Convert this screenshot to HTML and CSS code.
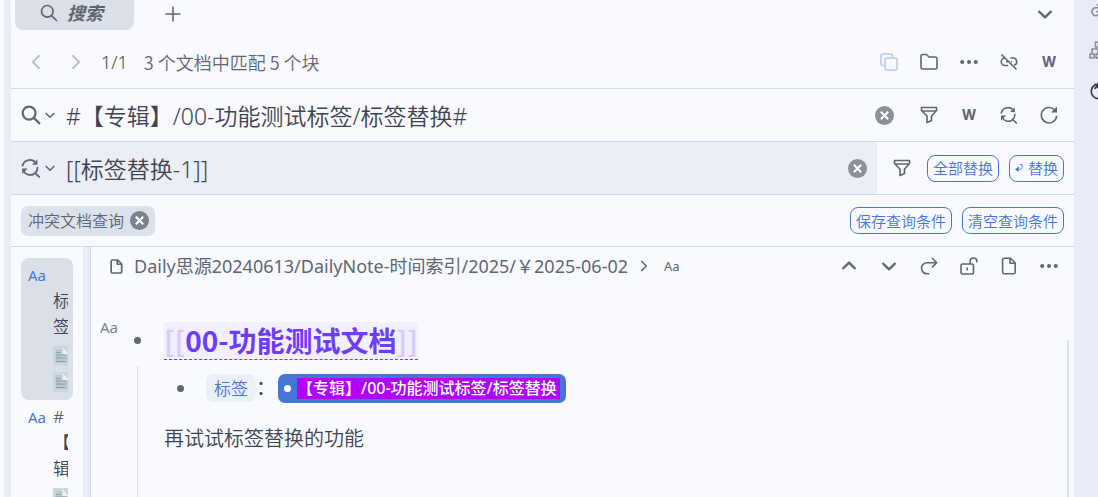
FILE: index.html
```html
<!DOCTYPE html>
<html lang="zh-CN">
<head>
<meta charset="utf-8">
<meta name="viewport" content="width=device-width, initial-scale=1">
<title>搜索</title>
<link rel="stylesheet" href="styles.css">
</head>
<body>
<svg class="sprite" aria-hidden="true">
  <symbol id="search" viewBox="0 0 18 18"><circle cx="7.3" cy="7.3" r="5.8"/><path d="M11.6 11.6 17 17"/></symbol>
  <symbol id="down" viewBox="0 0 18 18"><path d="M2.5 6 9 12.3 15.5 6"/></symbol>
  <symbol id="up" viewBox="0 0 18 18"><path d="M2.5 12 9 5.7 15.5 12"/></symbol>
  <symbol id="left" viewBox="0 0 18 18"><path d="M13 1.5 5.5 9 13 16.5"/></symbol>
  <symbol id="right" viewBox="0 0 18 18"><path d="M5 1.5 12.5 9 5 16.5"/></symbol>
  <symbol id="plus" viewBox="0 0 18 18"><path d="M9 1.5V16.5M1.5 9H16.5"/></symbol>
  <symbol id="copy" viewBox="0 0 18 18"><rect x="5" y="5" width="12" height="12" rx="2"/><path d="M5 12.5H3A2 2 0 0 1 1 10.5V3A2 2 0 0 1 3 1H10.5A2 2 0 0 1 12.5 3V5"/></symbol>
  <symbol id="folder" viewBox="0 0 18 18"><path d="M1 14.3V3.2Q1 1.5 2.7 1.5H6.5L9 4H15.3Q17 4 17 5.7V14.3Q17 16 15.3 16H2.7Q1 16 1 14.3Z"/></symbol>
  <symbol id="more" viewBox="0 0 18 18"><g class="solid"><circle cx="2.2" cy="9" r="2"/><circle cx="9" cy="9" r="2"/><circle cx="15.8" cy="9" r="2"/></g></symbol>
  <symbol id="unlink" viewBox="0 0 18 18"><path d="M1.5 1.5 16.5 16.5M10.5 5H13A3.7 3.7 0 0 1 14.2 12.2M5 5A3.7 3.7 0 0 0 5 12.5H8M6 8.8H8.5M11 8.8H12"/></symbol>
  <symbol id="filter" viewBox="0 0 18 18"><path d="M1.5 1.5H16.5V4.5L11.5 10V14.5L7 16.5V10L1.5 4.5ZM1.5 5H16.5"/></symbol>
  <symbol id="replace" viewBox="0 0 18 18"><path d="M1.2 7.5A7 7 0 0 1 12.8 3.5M2.3 11.5A6.8 6.8 0 0 0 11.5 14.5Q14.8 12.5 14.9 8M12 13 16.8 17.3"/><path class="solid" d="M14.8 1.2V6H10ZM1 14.5V9.5H6Z"/></symbol>
  <symbol id="refresh" viewBox="0 0 18 18"><path d="M14.5 3.8A7.7 7.7 0 1 0 16.7 9.8"/><path class="solid" d="M17 .5V6.5H11Z"/></symbol>
  <symbol id="clear" viewBox="0 0 18 18"><circle class="solid" cx="9" cy="9" r="9"/><path class="cross" d="M5.5 5.5 12.5 12.5M12.5 5.5 5.5 12.5"/></symbol>
  <symbol id="file" viewBox="0 0 18 18"><path d="M4.2 1.2H10.5L15.2 6V15.2Q15.2 16.8 13.6 16.8H4.2Q2.6 16.8 2.6 15.2V2.8Q2.6 1.2 4.2 1.2ZM10 1.5V6.3H15"/></symbol>
  <symbol id="redo" viewBox="0 0 18 18"><path d="M12 1 16.7 5.7 12 10.4M16.5 5.7H7A5.5 5.5 0 0 0 7 16.7H9.5"/></symbol>
  <symbol id="unlock" viewBox="0 0 18 18"><rect x="1" y="7" width="12.5" height="10" rx="1.5"/><path d="M10.2 7V4.3A3.3 3.3 0 0 1 16.8 4.3V5.5M7.2 10.5V13.5"/></symbol>
  <symbol id="enter" viewBox="0 0 18 18"><path d="M11 1H16V8Q16 12 11 12H6"/><path class="solid" d="M0 12 9 5.5 7.5 18Z"/></symbol>
  <symbol id="link" viewBox="0 0 18 18"><path d="M8 5.5 11 2.5A3.5 3.5 0 0 1 16 7.5L12.500 11A3.500 3.500 0 0 1 7.500 11M10 9A4 4 0 1 0 8 15.500L12 12"/></symbol>
  <symbol id="graph" viewBox="0 0 18 18"><path d="M6.500 1H11.500V6H6.500ZM9 6V9M3 13V8H15V13M1 13H5V17H1ZM7 13H11V17H7ZM13 13H17V17H13ZM9 8V13"/></symbol>
  <symbol id="fruit" viewBox="0 0 18 18"><path d="M6 3A7.200 7.200 0 1 0 13 3M5.500 2 8 3.500 9 1 11 4 14 2M5.500 7 8 4 10 7"/></symbol>
  <symbol id="page" viewBox="0 0 18 20"><rect width="18" height="20" fill="#cdd6de" stroke="none"/><path fill="#b9c9cf" stroke="none" d="M3 3H10L15 8V17H3Z"/><path fill="#edf2f4" stroke="none" d="M9.500 1.500V8H16Z"/><path stroke="#8ba0aa" stroke-width="1.200" d="M2.500 6.500H7.500M2.500 9H12.500M2.500 12H12.500M2.500 15.500H12.500"/></symbol>
</svg>

<div class="app">
  <div class="edge"></div>
  <main class="panel">
    <nav class="tabs">
      <button class="tab"><svg class="icon"><use href="#search"/></svg>搜索</button>
      <button class="ib" aria-label="新建"><svg class="icon"><use href="#plus"/></svg></button>
      <button class="ib end heavy" aria-label="展开"><svg class="icon"><use href="#down"/></svg></button>
    </nav>

    <div class="bar results">
      <button class="ib off heavy" aria-label="上一页"><svg class="icon s16"><use href="#left"/></svg></button>
      <button class="ib off heavy" aria-label="下一页"><svg class="icon s16"><use href="#right"/></svg></button>
      <span class="count">1/1</span><span class="summary">3 个文档中匹配 5 个块</span>
      <div class="tools end">
        <button class="ib pale" aria-label="复制"><svg class="icon"><use href="#copy"/></svg></button>
        <button class="ib" aria-label="路径"><svg class="icon"><use href="#folder"/></svg></button>
        <button class="ib" aria-label="更多"><svg class="icon"><use href="#more"/></svg></button>
        <button class="ib" aria-label="未引用"><svg class="icon"><use href="#unlink"/></svg></button>
        <button class="ib word">W</button>
      </div>
    </div>

    <div class="bar">
      <button class="mode" aria-label="搜索历史"><svg class="icon s20 bold"><use href="#search"/></svg><svg class="icon caret"><use href="#down"/></svg></button>
      <input class="query" aria-label="搜索" value="#【专辑】/00-功能测试标签/标签替换#">
      <button class="wipe" aria-label="清空"><svg class="icon s19"><use href="#clear"/></svg></button>
      <div class="tools">
        <button class="ib" aria-label="类型"><svg class="icon"><use href="#filter"/></svg></button>
        <button class="ib word">W</button>
        <button class="ib" aria-label="替换"><svg class="icon"><use href="#replace"/></svg></button>
        <button class="ib" aria-label="刷新"><svg class="icon"><use href="#refresh"/></svg></button>
      </div>
    </div>

    <div class="bar">
      <div class="replace">
        <button class="mode" aria-label="替换历史"><svg class="icon s20"><use href="#replace"/></svg><svg class="icon caret"><use href="#down"/></svg></button>
        <input class="query" aria-label="替换" value="[[标签替换-1]]">
        <button class="wipe" aria-label="清空"><svg class="icon s19"><use href="#clear"/></svg></button>
      </div>
      <div class="actions">
        <button class="ib" aria-label="替换类型"><svg class="icon"><use href="#filter"/></svg></button>
        <button class="outline">全部替换</button>
        <button class="outline"><svg class="icon s9"><use href="#enter"/></svg>替换</button>
      </div>
    </div>

    <div class="bar criteria">
      <div class="chip">冲突文档查询<button class="wipe" aria-label="移除"><svg class="icon s19"><use href="#clear"/></svg></button></div>
      <div class="actions end">
        <button class="outline">保存查询条件</button>
        <button class="outline">清空查询条件</button>
      </div>
    </div>

    <div class="split">
      <div class="list">
        <div class="item current"><span class="kind">Aa</span><span class="path">标签<svg class="thumb"><use href="#page"/></svg><svg class="thumb"><use href="#page"/></svg></span></div>
        <div class="item"><span class="kind">Aa</span><span class="path">#<br>【<br>辑<svg class="thumb"><use href="#page"/></svg></span></div>
      </div>
      <div class="gutter"></div>
      <section class="preview">
        <header class="crumbs">
          <svg class="icon s15"><use href="#file"/></svg>
          <span class="crumb">Daily思源20240613/DailyNote-时间索引/2025/￥2025-06-02</span>
          <svg class="icon s11"><use href="#right"/></svg>
          <span class="small">Aa</span>
          <div class="tools end">
            <button class="ib heavy" aria-label="上一个"><svg class="icon"><use href="#up"/></svg></button>
            <button class="ib heavy" aria-label="下一个"><svg class="icon"><use href="#down"/></svg></button>
            <button class="ib" aria-label="跳转"><svg class="icon"><use href="#redo"/></svg></button>
            <button class="ib" aria-label="解锁"><svg class="icon"><use href="#unlock"/></svg></button>
            <button class="ib" aria-label="文档"><svg class="icon"><use href="#file"/></svg></button>
            <button class="ib" aria-label="更多"><svg class="icon"><use href="#more"/></svg></button>
          </div>
        </header>
        <div class="doc">
          <span class="block-kind">Aa</span>
          <div class="rail"><i class="dot"></i><i class="line"></i></div>
          <article class="body">
            <h1 class="title"><a class="ref" href="#doc"><span class="bracket">[[</span>00-功能测试文档<span class="bracket">]]</span></a></h1>
            <div class="sub"><i class="dot"></i><code class="code">标签</code><span class="colon">：</span><a class="tag" href="#tag"><mark class="hit">【专辑】/00-功能测试标签/标签替换</mark></a></div>
            <p class="para">再试试标签替换的功能</p>
          </article>
          <div class="scroll"></div>
        </div>
      </section>
    </div>
  </main>
  <aside class="dock">
    <svg class="icon"><use href="#link"/></svg>
    <svg class="icon"><use href="#graph"/></svg>
    <svg class="icon dark"><use href="#fruit"/></svg>
  </aside>
</div>
</body>
</html>
```

FILE: styles.css
```css
* { box-sizing: border-box; }

body {
  margin: 0;
  background: #f9faff;
  color: #3d444f;
  font: 16px/24px "Noto Sans", "Noto Sans CJK SC", sans-serif;
}

button, input { font: inherit; color: inherit; border: 0; padding: 0; background: none; }

.sprite { position: absolute; width: 0; height: 0; }
.icon { width: 18px; height: 18px; flex: none; display: block; fill: none; stroke: #5f6571; stroke-width: 1.6; stroke-linejoin: round; overflow: visible; color: #5f6571; }
.s9 { width: 8px; height: 8px; stroke: #4876d6; color: #4876d6; stroke-width: 2; }
.s11 { width: 12px; height: 12px; stroke-width: 2.4; }
.s15 { width: 15px; height: 15px; stroke-width: 2; }
.s16 { width: 16px; height: 16px; }
.s19 { width: 19px; height: 19px; color: #8b9099; }
.s20 { width: 20px; height: 20px; }
.bold { stroke-width: 2; }
.caret { width: 12px; height: 12px; stroke-width: 2.4; }
.solid { fill: currentColor; stroke: none; }
.cross { stroke: #fff; stroke-width: 2; }
.heavy .icon { stroke-width: 2.4; }
.off .icon { stroke: #bdc0c8; }
.pale .icon { stroke: #b7caf3; }

.app { display: flex; height: 100vh; overflow: hidden; }
.edge { width: 11px; flex: none; border-left: 4px solid #f9faff; background: #e8ecf7; }
.panel { flex: 1; min-width: 0; display: flex; flex-direction: column; }
.dock { width: 24px; flex: none; background: #e8ecf7; overflow: hidden; display: flex; flex-direction: column; gap: 23px; padding-left: 15px; }
.dock .icon { stroke: #868b95; }
.dock .dark { stroke: #30343b; }

.end { margin-left: auto; }
.ib { width: 40px; height: 28px; flex: none; display: flex; align-items: center; justify-content: center; }
.tools { display: flex; align-items: center; padding-right: 5px; }
.word { color: #5f6571; font: 700 14px/18px Inter, sans-serif; }

.tabs { height: 36px; flex: none; display: flex; align-items: flex-start; padding: 0 9px 0 4px; }
.tab { width: 119px; height: 30px; display: flex; align-items: center; justify-content: center; gap: 9px; padding: 0 6px 4px 0; background: #dbdfe8; border-radius: 0 0 8px 8px; color: #5f6571; font-size: 18px; font-weight: 700; font-style: italic; }
.tab + .ib { margin-left: 19px; }

.bar { height: 53px; flex: none; display: flex; align-items: center; border-bottom: 1px solid #d1d8e5; }
.results { padding-left: 5px; color: #5f6571; font-size: 18px; font-weight: 350; }
.count { margin: 0 16px 0 5px; color: #3d444f; }
.summary { font-family: "Noto Sans CJK SC", sans-serif; line-height: 22px; }
.mode { width: 55px; flex: none; display: flex; align-items: center; gap: 3px; padding-left: 10px; }
.query { flex: 1; min-width: 0; height: 36px; font-size: 23px; font-weight: 350; outline: 0; }
.wipe { flex: none; margin-right: 15px; }
.replace { flex: 1; min-width: 0; height: 100%; display: flex; align-items: center; background: #ebeef6; }
.replace .wipe { margin-right: 10px; }
.actions { display: flex; align-items: center; gap: 10px; padding: 0 10px 0 5px; }
.actions .ib { margin-right: -5px; }
.outline { height: 27px; display: flex; align-items: center; gap: 5px; padding: 0 5px; border: 1px solid #4876d6; border-radius: 8px; color: #4876d6; font-size: 15px; font-weight: 350; }
.criteria { height: 52px; }
.chip { height: 30px; display: flex; align-items: center; gap: 6px; margin-left: 10px; padding: 0 6px 0 7px; border-radius: 7px; background: #dde1ea; color: #5f6571; font-weight: 350; }
.chip .wipe { margin: 0; }
.chip .s19 { color: #7d838d; }

.split { flex: 1; min-height: 0; display: flex; }
.list { width: 72px; flex: none; overflow: hidden; padding: 11px 10px 0; }
.item { display: flex; gap: 7px; padding: 4px 5px 2px 7px; border-radius: 8px; line-height: 26px; }
.current { flex-direction: column; align-items: flex-end; gap: 0; background: #dbdfe8; }
.kind { width: 18px; flex: none; color: #4876d6; font-size: 15px; }
.current .kind { align-self: flex-start; }
.path { width: 15px; flex: none; overflow: hidden; font-size: 17px; font-weight: 350; word-break: break-all; }
.thumb { display: block; width: 18px; height: 20px; margin: 6px 0; fill: none; }
.gutter { width: 8px; flex: none; background: #e8ecf7; border-right: 1px solid #d1d8e5; }

.preview { flex: 1; min-width: 0; display: flex; flex-direction: column; }
.crumbs { height: 38px; flex: none; display: flex; align-items: center; padding-left: 18px; color: #5f6571; }
.crumb { margin: 0 10px 0 10px; font-size: 18px; white-space: nowrap; }
.small { margin-left: 14px; font-size: 13px; }
.doc { flex: 1; min-height: 0; display: flex; padding-left: 9px; }
.block-kind { margin-top: 30px; width: 32px; flex: none; color: #7d838d; font-size: 15px; }
.rail { width: 10px; flex: none; display: flex; flex-direction: column; align-items: center; padding-top: 52px; }
.dot { width: 7px; height: 7px; flex: none; border-radius: 50%; background: #5f6571; }
.line { flex: 1; width: 1px; margin-top: 22px; background: #d5dae3; }
.body { flex: 1; min-width: 0; padding: 37px 0 0 22px; }
.title { margin: 0; font-family: "Noto Sans CJK SC", sans-serif; font-size: 28px; line-height: 37px; }
.ref { display: inline-block; border-bottom: 1px dashed #6c3cff; background: #f2f0ff; color: #6c3cff; text-decoration: none; }
.bracket { color: #d8ccff; }
.sub { display: flex; align-items: center; height: 30px; margin-top: 13px; padding-left: 13px; }
.code { margin-left: 22px; padding: 2px 8px; border-radius: 7px; background: #eceff5; color: #4876d6; font: 350 17px/24px "Noto Sans CJK SC", sans-serif; }
.colon { width: 22px; font-size: 20px; }
.tag { display: flex; align-items: center; height: 29px; padding: 0 6px; border-radius: 7px; background: #4876d6; text-decoration: none; }
.tag::before { content: ""; width: 7px; height: 7px; margin-right: 6px; border-radius: 50%; background: #fff; }
.hit { padding-right: 3px; background: #b300ff; color: #fff; font-weight: 500; line-height: 21px; white-space: nowrap; }
.para { margin: 22px 0 0; font-size: 20px; line-height: 28px; font-weight: 350; }
.scroll { width: 2px; flex: none; margin: 55px 5px 0 0; background: #dce3ee; }
```
